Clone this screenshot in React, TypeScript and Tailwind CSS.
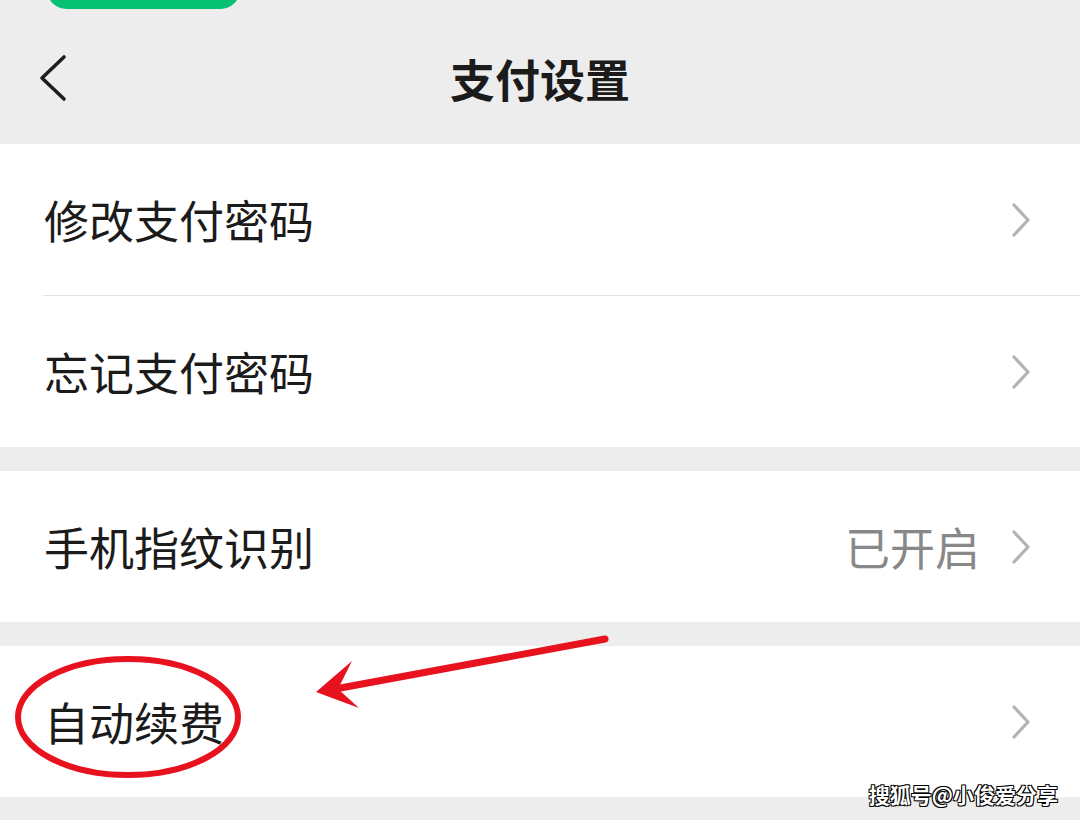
const font = "font-['Noto_Sans_CJK_SC','Noto_Sans',sans-serif]";

function Chevron() {
  return (
    <svg width="22" height="36" viewBox="0 0 22 36" className="shrink-0">
      <polyline
        points="4,3 18,18 4,33"
        fill="none"
        stroke="#b3b3b3"
        strokeWidth="3.2"
        strokeLinecap="round"
        strokeLinejoin="round"
      />
    </svg>
  );
}

interface RowProps {
  label: string;
  value?: string;
}

function Row({ label, value }: RowProps) {
  return (
    <div className="flex h-[151px] items-center justify-between pl-[44px] pr-[48px]">
      <span className="text-[45px] leading-none text-[#1b1b1b]">{label}</span>
      <div className="flex items-center gap-[30px]">
        {value && (
          <span className="text-[45px] leading-none text-[#888888]">{value}</span>
        )}
        <Chevron />
      </div>
    </div>
  );
}

export default function App() {
  return (
    <div className={`relative h-[820px] w-[1080px] overflow-hidden bg-[#ededed] ${font}`}>
      {/* header */}
      <div className="relative h-[144px]">
        <div className="absolute left-[47px] top-[-30px] h-[39px] w-[193px] rounded-full bg-[#07c173]" />
        <div className="flex h-full items-center pl-[38px] pt-[12px]">
          <svg width="30" height="48" viewBox="0 0 30 48">
            <polyline
              points="26,3 4,24 26,45"
              fill="none"
              stroke="#1e1e1e"
              strokeWidth="3.6"
              strokeLinecap="round"
              strokeLinejoin="round"
            />
          </svg>
        </div>
        <div className="absolute inset-x-0 top-0 flex h-full items-center justify-center pt-[12px]">
          <span className="text-[45px] font-bold leading-none text-[#1b1b1b]">支付设置</span>
        </div>
      </div>

      <div className="flex flex-col gap-[24px]">
        <div className="bg-white">
          <Row label="修改支付密码" />
          <div className="ml-[43px] h-px bg-[#e3e3e3]" />
          <Row label="忘记支付密码" />
        </div>
        <div className="bg-white">
          <Row label="手机指纹识别" value="已开启" />
        </div>
        <div className="bg-white">
          <Row label="自动续费" />
        </div>
      </div>

      {/* annotation */}
      <svg className="pointer-events-none absolute inset-0" width="1080" height="820" viewBox="0 0 1080 820">
        <ellipse cx="128" cy="717" rx="110" ry="58" fill="none" stroke="#e8121e" strokeWidth="6" />
        <line x1="605" y1="639" x2="335" y2="689" stroke="#e8121e" strokeWidth="7" strokeLinecap="round" />
        <polygon points="316,692 352,661 338,689 359,708" fill="#e8121e" />
      </svg>

      <div className="absolute right-[22px] top-[784px] text-[21px] font-bold leading-none text-white [text-shadow:-1px_-1px_0_#000,1px_-1px_0_#000,-1px_1px_0_#000,1px_1px_0_#000]">
        搜狐号@小俊爱分享
      </div>
    </div>
  );
}
